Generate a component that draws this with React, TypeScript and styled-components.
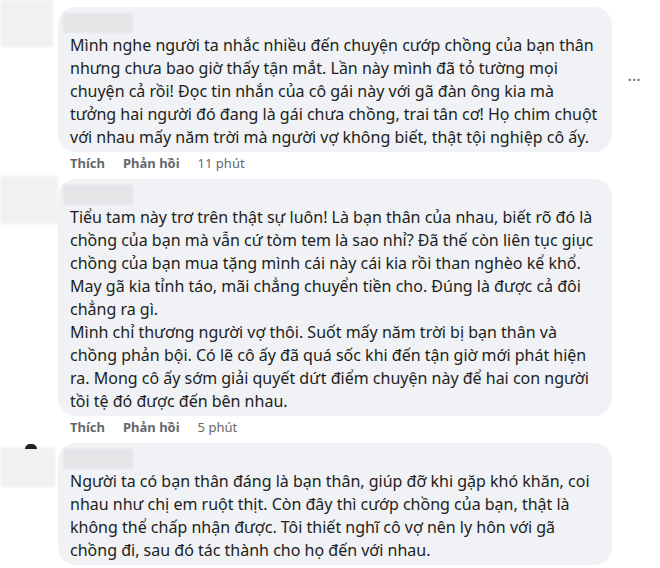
import { createGlobalStyle, styled } from 'styled-components';

const GlobalStyle = createGlobalStyle`
  html, body {
    margin: 0;
    padding: 0;
    background: #ffffff;
  }
  body {
    font-family: "Noto Sans", "Open Sans", sans-serif;
    color: #1c1e21;
  }
`;

type CommentData = {
  avatar: { width: number; height: number; top: number };
  bubbleTop: number;
  lines: string[];
  time: string;
  more?: boolean;
  mark?: boolean;
};

const comments: CommentData[] = [
  {
    avatar: { width: 53, height: 47, top: 0 },
    bubbleTop: 7,
    lines: [
      'Mình nghe người ta nhắc nhiều đến chuyện cướp chồng của bạn thân',
      'nhưng chưa bao giờ thấy tận mắt. Lần này mình đã tỏ tường mọi',
      'chuyện cả rồi! Đọc tin nhắn của cô gái này với gã đàn ông kia mà',
      'tưởng hai người đó đang là gái chưa chồng, trai tân cơ! Họ chim chuột',
      'với nhau mấy năm trời mà người vợ không biết, thật tội nghiệp cô ấy.',
    ],
    time: '11 phút',
    more: true,
  },
  {
    avatar: { width: 58, height: 48, top: 0 },
    bubbleTop: 3,
    lines: [
      'Tiểu tam này trơ trên thật sự luôn! Là bạn thân của nhau, biết rõ đó là',
      'chồng của bạn mà vẫn cứ tòm tem là sao nhỉ? Đã thế còn liên tục giục',
      'chồng của bạn mua tặng mình cái này cái kia rồi than nghèo kể khổ.',
      'May gã kia tỉnh táo, mãi chẳng chuyển tiền cho. Đúng là được cả đôi',
      'chẳng ra gì.',
      'Mình chỉ thương người vợ thôi. Suốt mấy năm trời bị bạn thân và',
      'chồng phản bội. Có lẽ cô ấy đã quá sốc khi đến tận giờ mới phát hiện',
      'ra. Mong cô ấy sớm giải quyết dứt điểm chuyện này để hai con người',
      'tồi tệ đó được đến bên nhau.',
    ],
    time: '5 phút',
  },
  {
    avatar: { width: 55, height: 40, top: 7 },
    bubbleTop: 3,
    lines: [
      'Người ta có bạn thân đáng là bạn thân, giúp đỡ khi gặp khó khăn, coi',
      'nhau như chị em ruột thịt. Còn đây thì cướp chồng của bạn, thật là',
      'không thể chấp nhận được. Tôi thiết nghĩ cô vợ nên ly hôn với gã',
      'chồng đi, sau đó tác thành cho họ đến với nhau.',
    ],
    time: '',
    mark: true,
  },
];

export default function App() {
  return (
    <>
      <GlobalStyle />
      <Page>
        {comments.map((c, i) => (
          <Row key={i}>
            <AvatarCol>
              <Avatar $w={c.avatar.width} $h={c.avatar.height} $top={c.avatar.top} />
              {c.mark && <AvatarMark />}
            </AvatarCol>
            <Body $top={c.bubbleTop}>
              <BubbleLine>
                <Bubble>
                  <NameBlur />
                  <Text>
                    {c.lines.map((l, j) => (
                      <Line key={j}>{l}</Line>
                    ))}
                  </Text>
                </Bubble>
                {c.more && <More>•••</More>}
              </BubbleLine>
              {c.time && (
                <Actions>
                  <Action>Thích</Action>
                  <Action>Phản hồi</Action>
                  <Time>{c.time}</Time>
                </Actions>
              )}
            </Body>
          </Row>
        ))}
      </Page>
    </>
  );
}

const Page = styled.div`
  width: 660px;
  height: 568px;
  overflow: hidden;
  display: flex;
  flex-direction: column;
  gap: 3px;
`;

const Row = styled.div`
  display: flex;
  align-items: flex-start;
`;

const AvatarCol = styled.div`
  position: relative;
  width: 58px;
  flex-shrink: 0;
`;

const Avatar = styled.div<{ $w: number; $h: number; $top: number }>`
  width: ${(p) => p.$w}px;
  height: ${(p) => p.$h}px;
  margin-top: ${(p) => p.$top}px;
  background: #f1f1f1;
  filter: blur(1px);
`;

const AvatarMark = styled.div`
  position: absolute;
  left: 25px;
  top: 4px;
  width: 12px;
  height: 5px;
  border-radius: 6px 6px 0 0;
  background: #222;
`;

const Body = styled.div<{ $top: number }>`
  display: flex;
  flex-direction: column;
  margin-top: ${(p) => p.$top}px;
`;

const BubbleLine = styled.div`
  display: flex;
  align-items: center;
`;

const Bubble = styled.div`
  width: 554px;
  box-sizing: border-box;
  background: #f0f2f5;
  border-radius: 18px;
  padding: 6px 12px 3px 12px;
`;

const NameBlur = styled.div`
  width: 70px;
  height: 20px;
  margin-left: -7px;
  background: #e4e5e7;
  filter: blur(1px);
`;

const Text = styled.div`
  margin-top: 1px;
  font-size: 16px;
  line-height: 23px;
  color: #1c1e21;
`;

const Line = styled.div`
  white-space: nowrap;
`;

const More = styled.div`
  margin-left: 16px;
  font-size: 9px;
  letter-spacing: 1px;
  color: #606770;
`;

const Actions = styled.div`
  display: flex;
  gap: 18px;
  padding: 1px 0 0 12px;
  height: 20px;
  align-items: center;
  font-size: 13px;
`;

const Action = styled.span`
  font-weight: 700;
  color: #65676b;
`;

const Time = styled.span`
  color: #65676b;
`;
